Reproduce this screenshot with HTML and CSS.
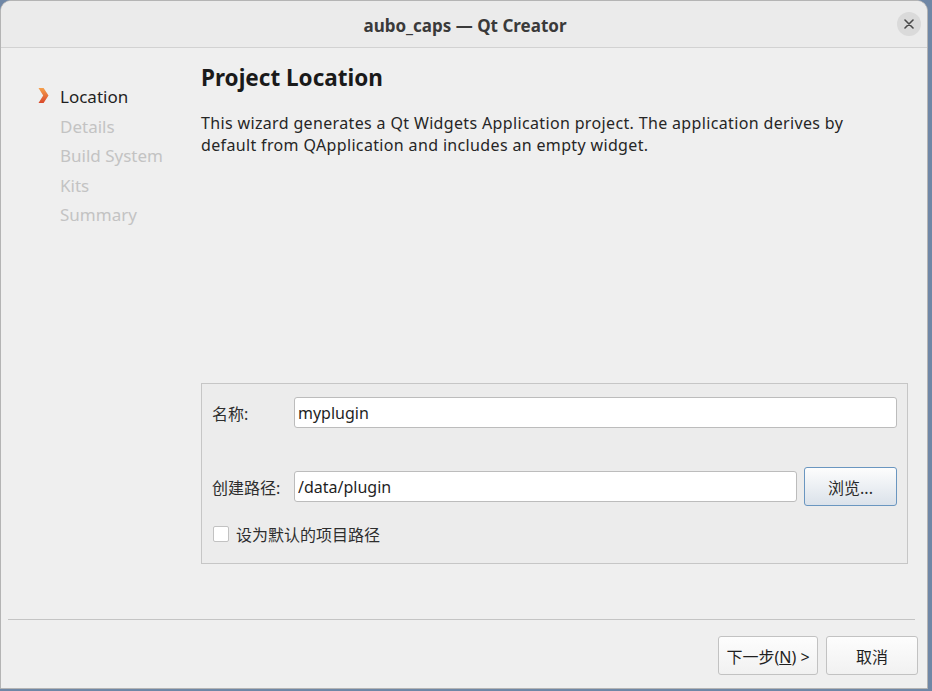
FILE: index.html
```html
<!DOCTYPE html>
<html lang="zh-CN">
<head>
    <meta charset="UTF-8">
    <title>aubo_caps — Qt Creator</title>
    <link rel="stylesheet" href="styles.css">
</head>
<body>

<div class="window">
    <div class="titlebar">
        <span class="title">aubo_caps — Qt Creator</span>
        <span class="close-btn">
            <svg width="10" height="10" viewBox="0 0 10 10">
                <path d="M1 1 L9 9 M9 1 L1 9" stroke="#4a4a4a" stroke-width="1.6" stroke-linecap="round"/>
            </svg>
        </span>
    </div>

    <div class="main">
        <ul class="steps">
            <li class="active">
                <svg class="step-arrow" width="11" height="17" viewBox="0 0 11 17">
                    <defs>
                        <linearGradient id="arrowGrad" x1="0" y1="0" x2="0" y2="1">
                            <stop offset="0" stop-color="#f5a04c"/>
                            <stop offset="1" stop-color="#d9482a"/>
                        </linearGradient>
                    </defs>
                    <path d="M0.5 1 L5.6 1 L10.5 8.5 L5.6 16 L0.5 16 L5.2 8.5 Z" fill="url(#arrowGrad)"/>
                </svg>
                Location
            </li>
            <li>Details</li>
            <li>Build System</li>
            <li>Kits</li>
            <li>Summary</li>
        </ul>

        <div class="page">
            <h1>Project Location</h1>
            <p class="intro">This wizard generates a Qt Widgets Application project. The application derives by<br>default from QApplication and includes an empty widget.</p>

            <div class="group">
                <div class="row row-name">
                    <label class="field-label">名称:</label>
                    <input type="text" class="field" value="myplugin">
                </div>
                <div class="row row-path">
                    <label class="field-label">创建路径:</label>
                    <input type="text" class="field" value="/data/plugin">
                    <button class="browse-btn">浏览...</button>
                </div>
                <div class="row row-check">
                    <span class="checkbox"></span>
                    <span>设为默认的项目路径</span>
                </div>
            </div>
        </div>
    </div>

    <div class="footer">
        <div class="separator"></div>
        <div class="buttons">
            <button class="dlg-btn next-btn">下一步(<u>N</u>) &gt;</button>
            <button class="dlg-btn cancel-btn">取消</button>
        </div>
    </div>
</div>

</body>
</html>
```

FILE: styles.css
```css
body {
    margin: 0;
    padding: 0;
    background: #6f87a6;
    font-family: "Noto Sans", "Noto Sans CJK SC", sans-serif;
    color: #2e2e2e;
}
.window {
    width: 928px;
    height: 689px;
    box-sizing: border-box;
    border: 1px solid #b4b4b4;
    border-radius: 11px 11px 0 0;
    background-color: #efefef;
    display: flex;
    flex-direction: column;
    overflow: hidden;
}
.titlebar {
    height: 46px;
    flex-shrink: 0;
    background-color: #ebebeb;
    border-bottom: 1px solid #d2d2d2;
    display: flex;
    align-items: center;
    justify-content: center;
    position: relative;
}
.title {
    font-size: 17px;
    font-weight: bold;
    color: #3a3a3a;
    margin-left: 2px;
    padding-top: 2px;
}
.close-btn {
    position: absolute;
    right: 6px;
    top: 11px;
    width: 24px;
    height: 24px;
    border-radius: 50%;
    background-color: #dadada;
    display: flex;
    align-items: center;
    justify-content: center;
}
.main {
    flex: 1;
    display: flex;
}
.steps {
    list-style: none;
    margin: 0;
    padding: 34px 0 0 37px;
    width: 163px;
    flex-shrink: 0;
}
.steps li {
    height: 29.5px;
    line-height: 29.5px;
    font-size: 17px;
    color: #c3c3c3;
    padding-left: 22px;
    position: relative;
}
.steps li.active {
    color: #1f1f1f;
}
.step-arrow {
    position: absolute;
    left: 0;
    top: 5px;
}
.page {
    flex: 1;
    display: flex;
    flex-direction: column;
    padding: 15px 19px 55px 0;
}
.page h1 {
    margin: 0;
    font-size: 22.5px;
    line-height: 30px;
    font-weight: bold;
    color: #1a1a1a;
}
.intro {
    margin: 19px 0 0 0;
    font-size: 16px;
    letter-spacing: 0.35px;
    line-height: 22px;
    color: #262626;
}
.group {
    margin-top: auto;
    height: 181px;
    box-sizing: border-box;
    border: 1px solid #c6c6c6;
    background-color: #ececec;
    padding: 13px 10px 0 10px;
}
.row {
    display: flex;
    align-items: center;
    font-size: 16px;
}
.field-label {
    width: 82px;
    flex-shrink: 0;
}
.field {
    flex: 1;
    min-width: 0;
    height: 31px;
    box-sizing: border-box;
    border: 1px solid #bcbcbc;
    border-radius: 3px;
    background: #fff;
    padding: 0 3px;
    font-family: inherit;
    font-size: 16px;
    color: #1f1f1f;
    outline: none;
}
.row-path {
    margin-top: 39px;
}
.browse-btn {
    margin-left: 7px;
    width: 93px;
    height: 39px;
    border: 1px solid #6a96c0;
    border-radius: 3px;
    background: linear-gradient(#fdfdfd, #dbe2ea);
    font-family: inherit;
    font-size: 16px;
    color: #2a2a2a;
}
.row-check {
    margin-top: 16px;
    padding-left: 1px;
}
.checkbox {
    width: 14px;
    height: 14px;
    border: 1px solid #c2c2c2;
    border-radius: 2px;
    background: #fff;
    margin-right: 7px;
}
.footer {
    flex-shrink: 0;
    padding: 0 9px 13px 7px;
}
.separator {
    height: 1px;
    background-color: #c4c4c4;
    margin-right: 3px;
}
.buttons {
    display: flex;
    justify-content: flex-end;
    gap: 8px;
    margin-top: 16px;
}
.dlg-btn {
    height: 39px;
    border: 1px solid #c2c2c2;
    border-radius: 3px;
    background: linear-gradient(#fdfdfd, #f1f1f1);
    font-family: inherit;
    font-size: 16px;
    color: #1f1f1f;
}
.next-btn {
    width: 100px;
}
.cancel-btn {
    width: 92px;
}
```
